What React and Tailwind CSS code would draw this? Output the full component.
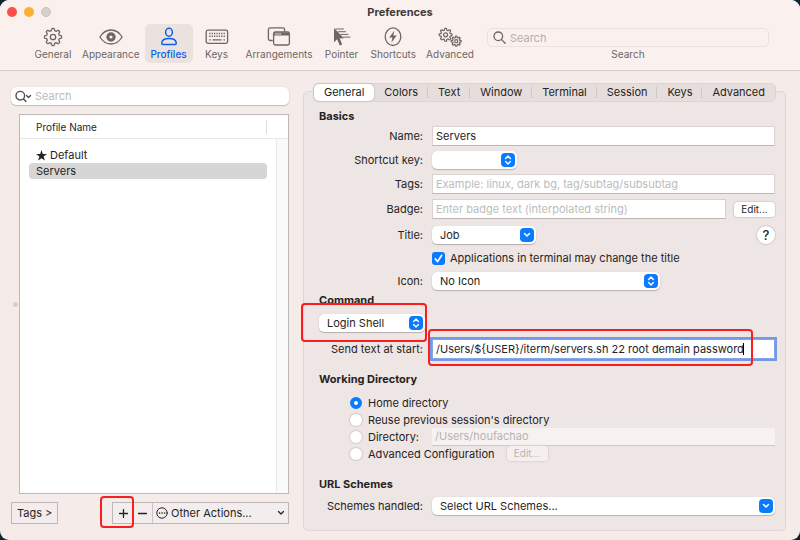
import React, { useState } from 'react';

// Outline of an eight-toothed gear
const gearPath = (cx, cy, radius, depth) => {
  const points = [];
  for (let i = 0; i < 160; i++) {
    const a = (i / 160) * Math.PI * 2;
    const r = radius + depth * Math.tanh(2.2 * Math.cos(8 * a));
    points.push(`${(cx + r * Math.sin(a)).toFixed(2)} ${(cy - r * Math.cos(a)).toFixed(2)}`);
  }
  return `M${points.join('L')}Z`;
};

const strokeProps = {
  fill: 'none',
  stroke: 'currentColor',
  strokeWidth: 1.3,
  strokeLinecap: 'round',
  strokeLinejoin: 'round',
};

const GearIcon = () => (
  <svg width="20" height="20" viewBox="0 0 20 20" {...strokeProps}>
    <path d={gearPath(10, 10, 7.5, 1.1)} />
    <circle cx="10" cy="10" r="2.7" />
  </svg>
);

const EyeIcon = () => (
  <svg width="24" height="20" viewBox="0 0 24 20" {...strokeProps}>
    <path d="M.9 10C3.4 5.9 7.3 3 12 3s8.6 2.9 11.1 7C20.6 14.1 16.7 17 12 17S3.4 14.1.9 10Z" />
    <path d="M12 5.3a4.7 4.7 0 1 0 0 9.4 4.7 4.7 0 0 0 0-9.400Zm0 3.100a1.600 1.600 0 1 1 0 3.200 1.600 1.600 0 0 1 0-3.200Z" fill="currentColor" fillRule="evenodd" stroke="none" />
  </svg>
);

const PersonIcon = () => (
  <svg width="18" height="20" viewBox="0 0 18 20" {...strokeProps} strokeWidth="1.5">
    <ellipse cx="9" cy="5.3" rx="3.4" ry="4" />
    <path d="M1.7 16.2C1.9 13.2 5 11.6 9 11.6s7.1 1.6 7.3 4.6c0 .9-.4 1.3-1.2 1.3H2.9c-.8 0-1.2-.4-1.2-1.3Z" />
  </svg>
);

const KeyboardIcon = () => (
  <svg width="24" height="20" viewBox="0 0 24 20" {...strokeProps}>
    <rect x="1.200" y="3.200" width="21.400" height="13.200" rx="1.800" />
    <path d="M4.2 6.5h16M4.2 9.300h16" strokeWidth="1.500" strokeDasharray="1.300 1.100" strokeLinecap="butt" />
    <path d="M4.2 12.9h1.5M7.5 12.9h9M18.4 12.9h1.5" strokeLinecap="butt" />
  </svg>
);

const WindowsIcon = () => (
  <svg width="24" height="20" viewBox="0 0 24 20" {...strokeProps}>
    <path d="M5.2 13.5H3.2A1.8 1.8 0 0 1 1.4 11.7V2.7A1.8 1.8 0 0 1 3.2.9h12.6a1.8 1.8 0 0 1 1.8 1.8v1.3" />
    <rect x="6.6" y="5" width="15.8" height="13" rx="1.7" />
    <path d="M7 5.6h15v2.9H7Z" fill="currentColor" stroke="none" />
    <path d="M8.3 7h1M10.5 7h1M12.7 7h1" stroke="#faf1ee" strokeWidth="1" />
  </svg>
);

const PointerIcon = () => (
  <svg width="20" height="20" viewBox="0 0 20 20" {...strokeProps}>
    <path d="M2 1v14.200l3.200-2.900 2.500 6.300 2.500-1-2.500-6.100 4.300-.3Z" fill="currentColor" stroke="none" />
    <path d="M4 2h7.500M6.500 4.700h7M9 7.400h7M11.500 10.100H18" strokeWidth="1" />
  </svg>
);

const BoltIcon = () => (
  <svg width="20" height="20" viewBox="0 0 20 20" {...strokeProps}>
    <ellipse cx="10" cy="9.700" rx="7.800" ry="8.800" />
    <path d="M11.3 3.7 6.2 10.6h3.2l-1 5.2 5.3-7.2h-3.4Z" fill="currentColor" stroke="none" />
  </svg>
);

const GearsIcon = () => (
  <svg width="24" height="20" viewBox="0 0 24 20" {...strokeProps} strokeWidth="1.2">
    <path d={gearPath(7.6, 7.8, 5.6, 0.9)} />
    <circle cx="7.6" cy="7.8" r="2" />
    <path d={gearPath(18.2, 14.2, 4.3, 0.8)} />
    <circle cx="18.2" cy="14.2" r="1.5" />
  </svg>
);

const MagnifierIcon = () => (
  <svg width="13" height="13" viewBox="0 0 13 13" {...strokeProps}>
    <circle cx="5.3" cy="5.3" r="4.3" />
    <path d="m8.6 8.600 3.600 3.600" />
  </svg>
);

const StarIcon = () => (
  <svg width="11" height="11" viewBox="0 0 20 20" fill="currentColor">
    <path d="m10 0 2.400 7.300H20l-6.200 4.500 2.400 7.500L10 14.800l-6.200 4.500 2.400-7.500L0 7.300h7.600Z" />
  </svg>
);

const UpDownBadge = () => (
  <span className="pointer-events-none absolute right-0.5 top-0.5 flex size-3.5 items-center justify-center rounded bg-[#0a7aff] text-white">
    <svg width="8" height="12" viewBox="0 0 8 12" {...strokeProps} strokeWidth="1.4">
      <path d="M1.600 4.400 4 2l2.400 2.400M1.600 7.600 4 10l2.400-2.400" />
    </svg>
  </span>
);

const DownBadge = () => (
  <span className="pointer-events-none absolute right-0.5 top-0.5 flex size-3.5 items-center justify-center rounded bg-[#0a7aff] text-white">
    <svg width="8" height="6" viewBox="0 0 8 6" {...strokeProps} strokeWidth="1.500">
      <path d="m1.500 1.500 2.500 2.500 2.500-2.500" />
    </svg>
  </span>
);

const PopUp = ({ id, value, label, width, pullDown = false, children }) => (
  <div className={`relative ${width}`}>
    <select
      id={id}
      aria-label={label}
      defaultValue={value}
      className="block h-[18px] w-full appearance-none rounded-[5px] bg-white pl-2 pr-5 leading-[18px] shadow-[0_1px_1px_#b9b1af,0_0_1px_#c9c1bf] outline-none"
    >
      <option value={value}>{value}</option>
    </select>
    {pullDown ? <DownBadge /> : <UpDownBadge />}
    {children}
  </div>
);

const Row = ({ label, htmlFor, children }) => (
  <div className="grid grid-cols-[104px_1fr] items-center gap-x-[9px]">
    {label ? <label htmlFor={htmlFor} className="whitespace-nowrap text-right">{label}</label> : <span />}
    {children}
  </div>
);

const fieldClass =
  'block h-5 w-full min-w-0 border border-[#dad2d0] border-b-[#bfb7b5] bg-white px-[3px] outline-none placeholder:text-[#bcbcbc]';

const toolbarItems = [
  { name: 'General', Icon: GearIcon },
  { name: 'Appearance', Icon: EyeIcon },
  { name: 'Profiles', Icon: PersonIcon },
  { name: 'Keys', Icon: KeyboardIcon },
  { name: 'Arrangements', Icon: WindowsIcon },
  { name: 'Pointer', Icon: PointerIcon },
  { name: 'Shortcuts', Icon: BoltIcon },
  { name: 'Advanced', Icon: GearsIcon },
];

const tabs = ['General', 'Colors', 'Text', 'Window', 'Terminal', 'Session', 'Keys', 'Advanced'];

const Toolbar = () => (
  <header className="border-b border-[#d6cdcb] bg-[#faf1ee]">
    <div className="relative flex h-6 items-center justify-center">
      {/* Window buttons */}
      <div className="absolute left-[7px] top-[7px] flex gap-[7px]">
        <span className="size-2.5 rounded-full bg-[#fe4e4b]" />
        <span className="size-2.5 rounded-full bg-[#fdb02f]" />
        <span className="size-2.5 rounded-full border border-[#c9c1bf] bg-[#d8cfcd]" />
      </div>
      <h1 className="text-[11px] font-bold text-[#3f3a39]">Preferences</h1>
    </div>
    <div className="flex pb-[7px] pl-[29px] pr-[31px]">
      {toolbarItems.map(({ name, Icon }) => (
        <button
          key={name}
          type="button"
          className={`flex h-[39px] min-w-12 flex-col items-center rounded-[5px] px-[5px] pt-[3px] text-[10px] leading-[14px] ${
            name === 'Profiles' ? 'bg-[#ebe2e0] font-medium text-[#0a60e8]' : 'text-[#6c6665]'
          }`}
        >
          <Icon />
          {name}
        </button>
      ))}
      <div className="ml-2 flex-1 pt-1 text-center text-[#6c6665]">
        <div className="flex h-[19px] items-center gap-1 rounded-[5px] border border-[#ebe1df] pl-[5px]">
          <MagnifierIcon />
          <input id="pref-search" type="text" placeholder="Search" className="min-w-0 flex-1 bg-transparent outline-none placeholder:text-[#b5adab]" />
        </div>
        <label htmlFor="pref-search" className="block text-[10px] leading-[14px]">Search</label>
      </div>
    </div>
  </header>
);

const ProfileList = () => (
  <aside className="flex w-[278px] flex-col pt-4">
    <div className="flex h-[18px] items-center rounded-[5px] bg-white pl-1 shadow-[0_1px_1px_#c3bbb9,0_0_1px_#b9b1af]">
      <svg width="17" height="13" viewBox="0 0 17 13" className="text-[#55504f]" {...strokeProps} strokeWidth="1.400">
        <circle cx="5.300" cy="5.700" r="4.300" />
        <path d="m8.500 8.900 2.500 2.600M11.500 5.500l2 1.900 2-1.900" />
      </svg>
      <input type="text" aria-label="Search profiles" placeholder="Search" className="ml-[3px] min-w-0 flex-1 bg-transparent outline-none placeholder:text-[#bcbcbc]" />
    </div>

    <div className="mt-[9px] flex flex-1">
      {/* Splitter handle */}
      <div className="flex w-2 items-center justify-center">
        <span className="size-[5px] rounded-full bg-[#d8cfcd]" />
      </div>
      <div className="flex flex-1 flex-col border border-[#bdb9b8] bg-white">
        <div className="flex h-6 items-center justify-between border-b border-[#e8e8e8] pl-4 pr-[21px] text-[10px]">
          <span>Profile Name</span>
          <span className="h-3.5 w-px bg-[#dcdcdc]" />
        </div>
        <div className="flex flex-1">
          <ul className="flex-1 px-[9px] pt-2 leading-4">
            <li className="flex items-center gap-[3px] pl-[7px]">
              <StarIcon />
              Default
            </li>
            <li className="rounded bg-[#d6d6d6] pl-[7px]">Servers</li>
          </ul>
          <div className="w-3 border-l border-[#ececec] bg-[#fafafa]" />
        </div>
      </div>
    </div>

    <div className="mb-4 mt-2 flex h-[22px] justify-between">
      <button type="button" className="border border-[#bdb7b6] bg-[#f3eeed] px-[5px]">Tags &gt;</button>
      <div className="relative flex border border-[#bdb7b6] bg-[#f3eeed]">
        <button type="button" aria-label="Add profile" className="flex w-5 items-center justify-center">
          <svg width="9" height="9" viewBox="0 0 9 9" {...strokeProps}><path d="M4.500.5v8M.5 4.500h8" /></svg>
        </button>
        <button type="button" aria-label="Remove profile" className="flex w-5 items-center justify-center border-r border-[#cdc6c5]">
          <svg width="9" height="9" viewBox="0 0 9 9" {...strokeProps}><path d="M.5 4.500h8" /></svg>
        </button>
        <div className="relative flex w-[135px] items-center">
          <svg width="12" height="12" viewBox="0 0 12 12" className="pointer-events-none absolute left-[3px]" {...strokeProps} strokeWidth="1">
            <circle cx="6" cy="6" r="5.200" />
            <path d="M3.500 6h.1M6 6h.1M8.500 6h.1" strokeWidth="1.500" />
          </svg>
          <select aria-label="Other actions" className="h-full w-full appearance-none bg-transparent pl-[18px] outline-none">
            <option>Other Actions...</option>
          </select>
          <svg width="8" height="6" viewBox="0 0 8 6" className="pointer-events-none absolute right-[3px]" {...strokeProps}>
            <path d="m1.500 1.500 2.500 2.500 2.500-2.500" />
          </svg>
        </div>
        <span className="pointer-events-none absolute -left-[13px] -top-[7px] h-8 w-[34px] rounded border-2 border-[#fb1d1d]" />
      </div>
    </div>
  </aside>
);

const DirectoryChoice = ({ id, label, checked, onSelect, children }) => (
  <div className="flex h-[17px] items-center">
    <input
      id={id}
      type="radio"
      name="working-directory"
      checked={checked}
      onChange={() => onSelect(id)}
      className="size-3 shrink-0 appearance-none rounded-full bg-white shadow-[0_0_1px_1px_#d5cccb] checked:border-4 checked:border-[#0a7aff] checked:shadow-none"
    />
    <label htmlFor={id} className="whitespace-nowrap pl-1.5">{label}</label>
    {children}
  </div>
);

const SessionSettings = () => {
  const [activeTab, setActiveTab] = useState('General');
  const [directory, setDirectory] = useState('home');

  return (
    <main className="mb-[9px] mt-5 flex-1 rounded-[5px] border border-[#e0d7d5] bg-[#ede6e4]">
      <div className="mx-[9px] -mt-[9px] flex h-[19px] rounded-[5px] border border-[#ddd4d2] bg-[#e6dedc]">
        {tabs.map((tab, index) => (
          <button
            key={tab}
            type="button"
            onClick={() => setActiveTab(tab)}
            className={`relative flex-auto px-2 text-center leading-[17px] ${
              tab === activeTab ? 'rounded-[5px] bg-white shadow-[0_0_2px_#aaa2a0]' : ''
            }`}
          >
            {tab}
            {index > 0 && index < tabs.length - 1 && (
              <span className="absolute right-0 top-[3px] h-[11px] w-px bg-[#cfc6c4]" />
            )}
          </button>
        ))}
      </div>

      <div className="pb-[15px] pl-[15px] pr-2.5 pt-1.5">
        <h2 className="font-bold leading-4">Basics</h2>
        <div className="mt-0.5 flex flex-col gap-[5px]">
          <Row label="Name:" htmlFor="name">
            <input id="name" type="text" defaultValue="Servers" className={fieldClass} />
          </Row>
          <Row label="Shortcut key:" htmlFor="shortcut">
            <PopUp id="shortcut" value="" width="w-[85px]" />
          </Row>
          <Row label="Tags:" htmlFor="tags">
            <input id="tags" type="text" placeholder="Example: linux, dark bg, tag/subtag/subsubtag" className={fieldClass} />
          </Row>
          <Row label="Badge:" htmlFor="badge">
            <div className="flex items-center gap-2">
              <input id="badge" type="text" placeholder="Enter badge text (interpolated string)" className={fieldClass} />
              <button type="button" className="h-[15px] w-[41px] shrink-0 rounded bg-white text-[10px] leading-[15px] shadow-[0_0_1px_1px_#d5cccb]">Edit...</button>
            </div>
          </Row>
        </div>

        <div className="mt-[7px] flex flex-col gap-[5px]">
          <Row label="Title:" htmlFor="title">
            <div className="flex h-[18px] items-center justify-between">
              <PopUp id="title" value="Job" width="w-[104px]" pullDown />
              <button type="button" aria-label="Help" className="size-[18px] rounded-full bg-white text-[13px] font-medium leading-[18px] shadow-[0_0_1px_1px_#d5cccb]">?</button>
            </div>
          </Row>
          <Row>
            <div className="flex h-[18px] items-center gap-[5px]">
              <span className="relative flex">
                <input id="change-title" type="checkbox" defaultChecked className="size-[13px] appearance-none rounded-[3px] bg-white checked:bg-[#0a7aff]" />
                <svg width="13" height="13" viewBox="0 0 13 13" className="pointer-events-none absolute inset-0 text-white" {...strokeProps} strokeWidth="1.700">
                  <path d="m3.300 6.900 2.300 2.700 4.100-6.300" />
                </svg>
              </span>
              <label htmlFor="change-title">Applications in terminal may change the title</label>
            </div>
          </Row>
          <Row label="Icon:" htmlFor="icon">
            <PopUp id="icon" value="No Icon" width="w-[228px]" />
          </Row>
        </div>

        <h2 className="mt-0.5 font-bold leading-4">Command</h2>
        <div className="mt-1.5 flex">
          <PopUp value="Login Shell" label="Command" width="w-[106px]">
            <span className="pointer-events-none absolute -left-[18px] -top-[11px] h-[39px] w-[126px] rounded border-2 border-[#fb1d1d]" />
          </PopUp>
        </div>
        <div className="mt-[7px]">
          <Row label="Send text at start:" htmlFor="send-text">
            <div className="relative">
              <input
                id="send-text"
                type="text"
                defaultValue="/Users/${USER}/iterm/servers.sh 22 root demain password"
                className="block h-5 w-full border border-[#86a5e6] bg-white px-[3px] shadow-[0_0_0_2px_#7398e4] outline-none"
              />
              <span className="pointer-events-none absolute left-[311px] top-1 h-3 w-px bg-black" />
              <span className="pointer-events-none absolute -left-1 -top-2.5 h-[37px] w-[325px] rounded border-2 border-[#fb1d1d]" />
            </div>
          </Row>
        </div>

        <h2 className="mt-3 font-bold leading-4">Working Directory</h2>
        <div className="mt-[7px] pl-[31px]">
          <DirectoryChoice id="home" label="Home directory" checked={directory === 'home'} onSelect={setDirectory} />
          <DirectoryChoice id="reuse" label="Reuse previous session's directory" checked={directory === 'reuse'} onSelect={setDirectory} />
          <DirectoryChoice id="custom" label="Directory:" checked={directory === 'custom'} onSelect={setDirectory}>
            <input
              type="text"
              aria-label="Directory path"
              disabled
              defaultValue="/Users/houfachao"
              className="ml-[13px] h-[18px] min-w-0 flex-1 border-b border-[#d0c8c6] bg-[#f6f2f1] px-[3px] text-[#b9b3b2]"
            />
          </DirectoryChoice>
          <DirectoryChoice id="advanced" label="Advanced Configuration" checked={directory === 'advanced'} onSelect={setDirectory}>
            <button type="button" disabled className="ml-3 h-[15px] w-[41px] rounded bg-[#f5f0ef] text-[10px] leading-[15px] text-[#b9b3b2] shadow-[0_0_1px_1px_#ddd5d3]">Edit...</button>
          </DirectoryChoice>
        </div>

        <h2 className="mt-3.5 font-bold leading-4">URL Schemes</h2>
        <div className="mt-[5px]">
          <Row label="Schemes handled:" htmlFor="schemes">
            <PopUp id="schemes" value="Select URL Schemes..." width="w-full" pullDown />
          </Row>
        </div>
      </div>
    </main>
  );
};

const App = () => (
  <div className="flex min-h-screen bg-[#0c2530] font-[Inter,'Liberation_Sans',sans-serif] text-[11px] leading-4 text-[#262322]">
    <div className="flex flex-1 flex-col overflow-hidden rounded-[9px] bg-[#f5ecea]">
      <Toolbar />
      <div className="flex flex-1 gap-3.5 pl-[11px] pr-3.5">
        <ProfileList />
        <SessionSettings />
      </div>
    </div>
  </div>
);

export default App;
